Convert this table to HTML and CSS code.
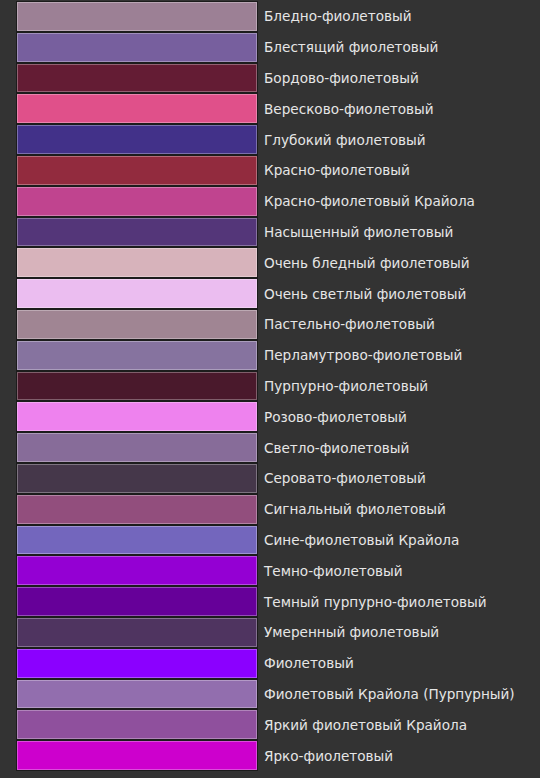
FILE: index.html
```html
<!DOCTYPE html>
<html lang="ru">
<head>
  <meta charset="UTF-8">
  <title>Оттенки фиолетового</title>
  <link rel="stylesheet" href="styles.css">
</head>
<body>
  <ul class="palette">
    <li><span class="swatch" style="background:#9c8095"></span>Бледно-фиолетовый</li>
    <li><span class="swatch" style="background:#775f9e"></span>Блестящий фиолетовый</li>
    <li><span class="swatch" style="background:#641c34"></span>Бордово-фиолетовый</li>
    <li><span class="swatch" style="background:#e0508a"></span>Вересково-фиолетовый</li>
    <li><span class="swatch" style="background:#423189"></span>Глубокий фиолетовый</li>
    <li><span class="swatch" style="background:#922b3e"></span>Красно-фиолетовый</li>
    <li><span class="swatch" style="background:#c0448f"></span>Красно-фиолетовый Крайола</li>
    <li><span class="swatch" style="background:#543679"></span>Насыщенный фиолетовый</li>
    <li><span class="swatch" style="background:#d7b3bb"></span>Очень бледный фиолетовый</li>
    <li><span class="swatch" style="background:#ebbdf0"></span>Очень светлый фиолетовый</li>
    <li><span class="swatch" style="background:#a08593"></span>Пастельно-фиолетовый</li>
    <li><span class="swatch" style="background:#86739f"></span>Перламутрово-фиолетовый</li>
    <li><span class="swatch" style="background:#4a192c"></span>Пурпурно-фиолетовый</li>
    <li><span class="swatch" style="background:#ee82ee"></span>Розово-фиолетовый</li>
    <li><span class="swatch" style="background:#876c99"></span>Светло-фиолетовый</li>
    <li><span class="swatch" style="background:#45374a"></span>Серовато-фиолетовый</li>
    <li><span class="swatch" style="background:#924e7d"></span>Сигнальный фиолетовый</li>
    <li><span class="swatch" style="background:#7366bd"></span>Сине-фиолетовый Крайола</li>
    <li><span class="swatch" style="background:#9400d3"></span>Темно-фиолетовый</li>
    <li><span class="swatch" style="background:#660099"></span>Темный пурпурно-фиолетовый</li>
    <li><span class="swatch" style="background:#4f3460"></span>Умеренный фиолетовый</li>
    <li><span class="swatch" style="background:#8b00ff"></span>Фиолетовый</li>
    <li><span class="swatch" style="background:#926eae"></span>Фиолетовый Крайола (Пурпурный)</li>
    <li><span class="swatch" style="background:#8f509d"></span>Яркий фиолетовый Крайола</li>
    <li><span class="swatch" style="background:#cd00cd"></span>Ярко-фиолетовый</li>
  </ul>
</body>
</html>
```

FILE: styles.css
```css
body {
  margin: 0;
  background-color: #333333;
  font-family: "DejaVu Sans", sans-serif;
}
.palette {
  list-style: none;
  margin: 0;
  padding: 1px 0 0 16px;
}
.palette li {
  display: flex;
  align-items: center;
  gap: 6px;
  height: 30.8px;
  color: #e6e6e6;
  font-size: 13.6px;
}
.swatch {
  box-sizing: border-box;
  width: 242px;
  height: 100%;
  border: 1px solid #1c1c1c;
  box-shadow: inset 0 0 0 1px rgba(255, 255, 255, 0.3);
}
```
